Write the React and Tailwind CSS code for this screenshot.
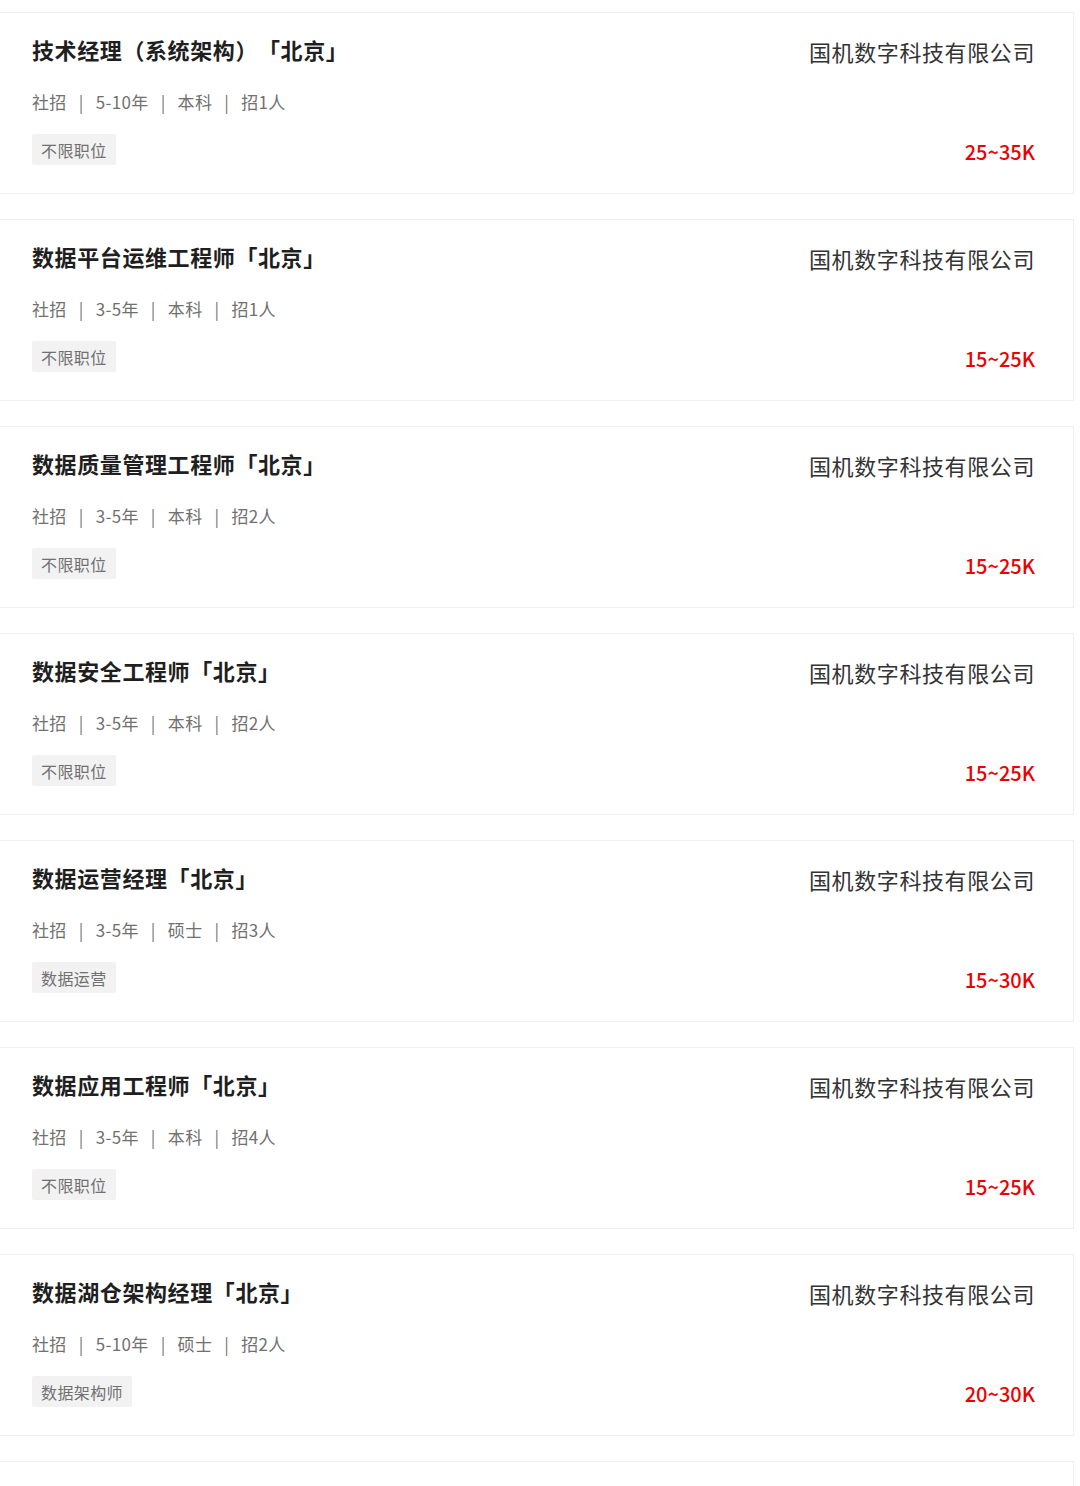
import React from "react";

const jobs = [
  { title: "技术经理（系统架构）「北京」", meta: ["社招", "5-10年", "本科", "招1人"], tag: "不限职位", salary: "25~35K" },
  { title: "数据平台运维工程师「北京」", meta: ["社招", "3-5年", "本科", "招1人"], tag: "不限职位", salary: "15~25K" },
  { title: "数据质量管理工程师「北京」", meta: ["社招", "3-5年", "本科", "招2人"], tag: "不限职位", salary: "15~25K" },
  { title: "数据安全工程师「北京」", meta: ["社招", "3-5年", "本科", "招2人"], tag: "不限职位", salary: "15~25K" },
  { title: "数据运营经理「北京」", meta: ["社招", "3-5年", "硕士", "招3人"], tag: "数据运营", salary: "15~30K" },
  { title: "数据应用工程师「北京」", meta: ["社招", "3-5年", "本科", "招4人"], tag: "不限职位", salary: "15~25K" },
  { title: "数据湖仓架构经理「北京」", meta: ["社招", "5-10年", "硕士", "招2人"], tag: "数据架构师", salary: "20~30K" },
];

function Card({ job }) {
  return (
    <div className="shrink-0 flex justify-between w-[1074px] h-[182px] border-y border-r border-[#efefef] bg-white pl-[32px] pr-[38px] pt-[21px] pb-[25px]">
      <div className="flex flex-col">
        <div className="text-[22px] leading-[30px] font-bold tracking-[0.6px] text-[#1f1f1f] [text-spacing-trim:space-all]">{job.title}</div>
        <div className="mt-[26px] flex items-center text-[17px] leading-[24px] text-[#707070] tracking-[0.35px]">
          {job.meta.map((m, i) => (
            <React.Fragment key={i}>
              {i > 0 && <span className="px-[12px] text-[#777]">|</span>}
              <span>{m}</span>
            </React.Fragment>
          ))}
        </div>
        <div className="mt-[20px] self-start h-[31px] px-[9px] flex items-center bg-[#f2f2f2] rounded-[2px] text-[16px] tracking-[0.4px] text-[#707070]">
          {job.tag}
        </div>
      </div>
      <div className="flex flex-col items-end justify-between">
        <div className="mt-[2px] text-[22px] leading-[30px] tracking-[0.6px] text-[#333]">国机数字科技有限公司</div>
        <div className="mb-[1px] text-[20px] leading-[30px] font-medium text-[#ee0000]">{job.salary}</div>
      </div>
    </div>
  );
}

export default function App() {
  return (
    <div
      className="w-[1080px] h-[1486px] overflow-hidden bg-white pt-[12px] flex flex-col gap-[25px]"
      style={{ fontFamily: '"Noto Sans CJK SC", "Noto Sans", sans-serif' }}
    >
      {jobs.map((j, i) => (
        <Card key={i} job={j} />
      ))}
      <div className="shrink-0 w-[1074px] h-[182px] border-y border-r border-[#efefef] bg-white" />
    </div>
  );
}
